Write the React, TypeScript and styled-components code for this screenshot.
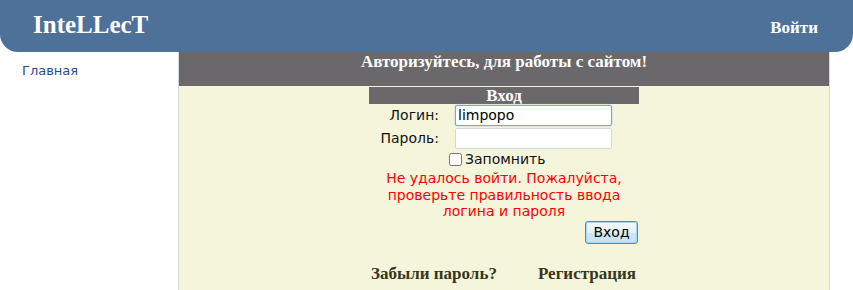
import styled, { createGlobalStyle } from "styled-components";

const GlobalStyle = createGlobalStyle`
	html, body {
		margin: 0;
		padding: 0;
		background: #ffffff;
	}
	body {
		font-family: "DejaVu Sans", Verdana, sans-serif;
	}
`;

const Page = styled.div`
	width: 853px;
	height: 290px;
	overflow: hidden;
`;

const Header = styled.header`
	height: 52px;
	background-color: #4e7199;
	border-radius: 0 0 18px 18px;
	display: flex;
	justify-content: space-between;
	align-items: baseline;
	padding: 0 35px 0 33px;
	box-sizing: border-box;
`;

const Logo = styled.h1`
	margin: 0;
	padding-top: 10px;
	font-family: "Liberation Serif", "Times New Roman", serif;
	font-size: 25px;
	line-height: 30px;
	font-weight: bold;
	color: #ffffff;
`;

const LoginLink = styled.a`
	font-family: "Liberation Serif", "Times New Roman", serif;
	font-size: 17px;
	font-weight: bold;
	color: #ffffff;
	text-decoration: none;
`;

const Body = styled.div`
	display: flex;
`;

const Sidebar = styled.nav`
	width: 178px;
	padding: 8px 0 0 22px;
	box-sizing: border-box;
	a {
		font-size: 13px;
		color: #2b4a98;
		text-decoration: none;
	}
`;

const Main = styled.main`
	width: 650px;
	border-left: 1px solid #d3d8de;
	border-right: 1px solid #d3d8de;
	background-color: #f5f5dc;
	min-height: 240px;
`;

const Banner = styled.h2`
	margin: 0;
	height: 34px;
	padding-top: 1px;
	box-sizing: border-box;
	background-color: #6b686b;
	color: #ffffff;
	text-align: center;
	font-family: "Liberation Serif", "Times New Roman", serif;
	font-size: 17px;
	line-height: 18px;
	font-weight: bold;
`;

const LoginForm = styled.form`
	width: 270px;
	margin: 1px auto 0;
	font-size: 14px;
	color: #111111;
`;

const FormTitle = styled.div`
	background-color: #6b686b;
	color: #ffffff;
	text-align: center;
	font-family: "Liberation Serif", "Times New Roman", serif;
	font-size: 17px;
	line-height: 17px;
	font-weight: bold;
`;

const Row = styled.div`
	display: grid;
	grid-template-columns: 76px 1fr;
	align-items: center;
	height: ${(props: { $h: number }) => props.$h}px;
`;

const Label = styled.label`
	text-align: right;
	padding-right: 6px;
`;

const Field = styled.input<{ $focused?: boolean }>`
	margin-left: 10px;
	width: 157px;
	height: 21px;
	box-sizing: border-box;
	padding: 0 2px;
	font-family: "DejaVu Sans", Verdana, sans-serif;
	font-size: 14px;
	color: #000000;
	background: #ffffff;
	outline: none;
	border: 1px solid ${(props) => (props.$focused ? "#7aa7d3" : "#d2d8de")};
	border-radius: 2px;
	box-shadow: ${(props) => (props.$focused ? "0 0 2px #9cc4ea" : "none")};
`;

const Remember = styled.label`
	grid-column: 2;
	display: flex;
	align-items: center;
	margin-left: 4px;
	input {
		margin: 0 3px 0 0;
		width: 13px;
		height: 13px;
	}
`;

const ErrorText = styled.p`
	margin: 2px 0 0;
	color: #ff0000;
	text-align: center;
	line-height: 16.5px;
`;

const ButtonRow = styled.div`
	display: flex;
	justify-content: flex-end;
	padding: 1px 1px 0 0;
`;

const SubmitButton = styled.button`
	width: 53px;
	height: 23px;
	padding: 0;
	font-family: "DejaVu Sans", Verdana, sans-serif;
	font-size: 14px;
	color: #000000;
	border: 1px solid #3c8fcb;
	border-radius: 3px;
	background: linear-gradient(#f3f9fd 0%, #e3f1fb 50%, #cfe7f7 51%, #c4e1f5 100%);
	box-shadow: inset 0 0 0 1px #a8d8f4;
`;

const Links = styled.div`
	display: flex;
	justify-content: space-between;
	padding: 0 3px 0 2px;
	margin-top: 20px;
	a {
		font-family: "Liberation Serif", "Times New Roman", serif;
		font-size: 17px;
		font-weight: bold;
		color: #36361a;
		text-decoration: none;
	}
`;

function App() {
	return (
		<Page>
			<GlobalStyle />
			<Header>
				<Logo>InteLLecT</Logo>
				<LoginLink href="#">Войти</LoginLink>
			</Header>
			<Body>
				<Sidebar>
					<a href="#">Главная</a>
				</Sidebar>
				<Main>
					<Banner>Авторизуйтесь, для работы с сайтом!</Banner>
					<LoginForm onSubmit={(e) => e.preventDefault()}>
						<FormTitle>Вход</FormTitle>
						<Row $h={22}>
							<Label>Логин:</Label>
							<Field $focused defaultValue="limpopo" />
						</Row>
						<Row $h={24}>
							<Label>Пароль:</Label>
							<Field type="password" />
						</Row>
						<Row $h={18}>
							<Remember>
								<input type="checkbox" />
								Запомнить
							</Remember>
						</Row>
						<ErrorText>
							Не удалось войти. Пожалуйста,
							<br />
							проверьте правильность ввода
							<br />
							логина и пароля
						</ErrorText>
						<ButtonRow>
							<SubmitButton type="submit">Вход</SubmitButton>
						</ButtonRow>
						<Links>
							<a href="#">Забыли пароль?</a>
							<a href="#">Регистрация</a>
						</Links>
					</LoginForm>
				</Main>
			</Body>
		</Page>
	);
}

export default App;
